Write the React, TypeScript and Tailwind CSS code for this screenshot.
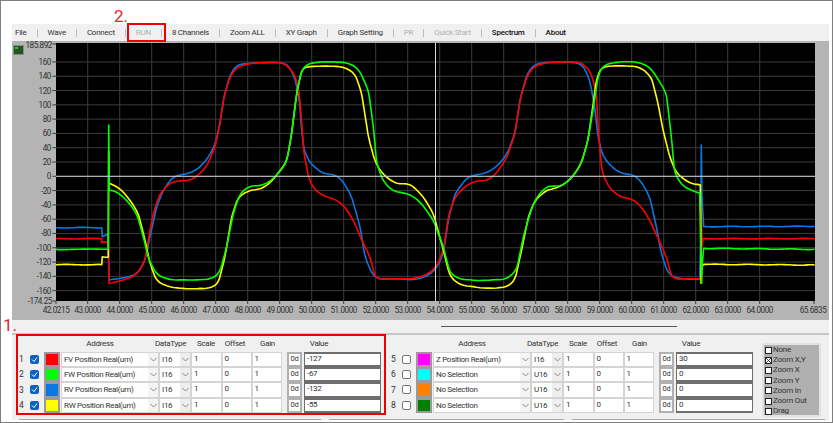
import React from 'react';

type Pt = [number, number];

// Curve points are read off three crops of the plot, so each list keeps the crop's own coordinates
const toPage = (offsetX: number, pts: number[]): Pt[] => {
  const out: Pt[] = [];
  for (let i = 0; i < pts.length; i += 2) out.push([offsetX + pts[i] / 3, 50 + pts[i + 1] / 3]);
  return out;
};

const buildCurve = (a: number[], b: number[], c: number[]): Pt[] => [
  ...toPage(0, a),
  ...toPage(280, b),
  ...toPage(553, c),
];

const curves = [
  {
    color: '#0a78e0',
    pts: buildCurve(
      [168,533,305,533,307,560,325,552,327,690,400,678,420,660,437,625,450,560,470,470,490,420,520,378,560,372,590,360,620,330,645,285,660,220,672,140,690,75,710,45,740,40,780,38,840,37],
      [25,45,45,85,58,150,65,240,72,300,90,340,130,372,165,373,190,395,215,440,240,530,255,620,275,670,295,688,350,686,400,690,440,680,470,655,490,610,505,510,525,430,565,378,610,372,645,355,680,315,705,250,720,150,740,75,760,45,790,38,819,36],
      [60,36,90,45,110,90,125,170,135,260,150,320,180,355,210,372,240,373,265,395,290,440,310,530,325,610,345,670,370,685,440,688,443,560,445,285,447,440,452,530,785,529],
    ),
  },
  {
    color: '#ff0000',
    pts: buildCurve(
      [168,566,305,566,305,577,325,577,327,700,360,693,400,680,420,660,435,630,445,570,460,490,480,430,510,398,540,392,565,392,590,380,620,350,645,290,660,220,672,140,690,80,710,52,740,42,780,38,840,37],
      [20,45,45,75,58,130,65,220,72,310,85,380,100,415,130,438,160,445,190,465,220,510,245,570,270,620,285,680,300,688,350,686,400,686,440,675,470,650,490,600,505,500,525,440,560,405,590,392,620,392,645,375,680,325,705,250,720,150,740,80,760,50,790,40,819,37],
      [60,35,90,40,115,70,130,130,138,270,148,370,170,415,200,440,240,448,265,470,290,510,320,575,340,620,358,688,440,686,443,686,445,470,447,590,450,566,785,566],
    ),
  },
  {
    color: '#ffff00',
    pts: buildCurve(
      [168,644,305,644,307,620,325,622,326,305,328,400,360,415,390,450,415,490,435,570,450,640,470,695,510,712,570,717,630,715,655,700,675,620,695,500,715,440,750,420,780,418,810,400,840,362],
      [20,335,35,250,50,130,65,60,80,50,130,48,190,50,225,70,245,130,265,260,285,335,310,375,350,403,390,400,430,440,460,490,490,600,510,680,540,705,610,715,680,712,705,690,725,600,745,500,765,450,800,420,819,417],
      [30,405,60,380,85,340,105,270,118,180,130,90,145,50,200,47,260,50,295,80,315,160,330,240,350,320,370,370,410,400,442,405,443,500,444,700,447,650,452,643,785,645],
    ),
  },
  {
    color: '#00ff00',
    pts: buildCurve(
      [168,598,325,598,326,225,328,420,350,425,380,450,410,490,430,560,445,625,470,675,510,690,600,690,640,685,660,665,680,590,700,490,720,430,750,407,780,408,810,395,840,365],
      [20,335,35,250,50,130,65,60,85,40,130,35,200,37,235,55,265,120,280,230,290,340,310,395,340,425,385,430,420,455,460,510,490,590,510,670,540,688,600,692,680,688,710,660,730,560,750,490,770,440,800,410,819,408],
      [30,408,60,378,85,340,105,270,120,180,135,80,150,45,200,35,250,35,290,50,320,95,340,130,355,260,365,370,390,410,440,430,443,598,446,700,448,640,452,595,785,598],
    ),
  },
];

// Rounds the corners of a trace, except the sharp steps and spikes, and adds a little sensor noise
const toPath = (pts: Pt[], seed: number) => {
  const out: Pt[] = [pts[0]];
  pts.slice(1, -1).forEach((v, idx) => {
    const p = pts[idx];
    const n = pts[idx + 2];
    const sharp = Math.abs(v[0] - p[0]) < 2 || Math.abs(n[0] - v[0]) < 2;
    if (sharp) {
      out.push(v);
      return;
    }
    const cut = (o: Pt): Pt => {
      const len = Math.hypot(o[0] - v[0], o[1] - v[1]);
      const f = Math.min(0.5, 7 / len);
      return [v[0] + (o[0] - v[0]) * f, v[1] + (o[1] - v[1]) * f];
    };
    const a = cut(p);
    const b = cut(n);
    for (let s = 0; s <= 4; s++) {
      const t = s / 4;
      const q = (i: 0 | 1) => (1 - t) * (1 - t) * a[i] + 2 * t * (1 - t) * v[i] + t * t * b[i];
      out.push([q(0), q(1)]);
    }
  });
  out.push(pts[pts.length - 1]);

  let d = `M${out[0][0].toFixed(1)} ${out[0][1].toFixed(1)}`;
  out.slice(1).forEach(([x, y], i) => {
    const [px, py] = out[i];
    const steps = Math.max(1, Math.floor(Math.abs(x - px) / 2.5));
    for (let s = 1; s <= steps; s++) {
      const t = s / steps;
      const cx = px + t * (x - px);
      const noise = s === steps ? 0 : Math.sin(cx * 2.3 + seed) * 0.3;
      d += `L${cx.toFixed(1)} ${(py + t * (y - py) + noise).toFixed(1)}`;
    }
  });
  return d;
};

const PLOT = { left: 56, right: 815, top: 43, bottom: 301 };
const xOf = (v: number) => 87.7 + (v - 43) * 32;
const yOf = (v: number) => 176.3 - v * 0.7146;
const yTicks = Array.from({ length: 17 }, (_, i) => 160 - i * 20);
const xTicks = Array.from({ length: 22 }, (_, i) => 43 + i);

const Chart = () => (
  <svg width={817} height={279} className="block overflow-visible" style={{ fontFamily: 'Roboto, sans-serif' }}>
    <g transform="translate(-12 -41)">
      <rect x={PLOT.left} y={PLOT.top} width={PLOT.right - PLOT.left} height={PLOT.bottom - PLOT.top} fill="#000" />
      {xTicks.map((v) => (
        <line key={v} x1={xOf(v)} x2={xOf(v)} y1={PLOT.top} y2={PLOT.bottom} stroke="#3c3c3c" />
      ))}
      {yTicks.map((v) => (
        <line key={v} x1={PLOT.left} x2={PLOT.right} y1={yOf(v)} y2={yOf(v)} stroke="#3c3c3c" />
      ))}
      {curves.map((c, i) => (
        <path key={c.color} d={toPath(c.pts, i * 1.7)} fill="none" stroke={c.color} strokeWidth={1.6} strokeLinejoin="round" />
      ))}
      <line x1={PLOT.left} x2={PLOT.right} y1={yOf(0)} y2={yOf(0)} stroke="#d0d0d0" />
      <line x1={435.5} x2={435.5} y1={PLOT.top} y2={PLOT.bottom} stroke="#d8d8d8" />

      <g fill="#333" fontSize={8.2} textAnchor="end" letterSpacing={-0.45}>
        {yTicks.map((v) => (
          <text key={v} x={51} y={yOf(v) + 3}>{v}</text>
        ))}
        <text x={52} y={47.5}>185.892</text>
        <text x={52} y={304}>-174.25</text>
      </g>
      <g stroke="#3a3a3a">
        {[...yTicks.map(yOf), 44, 301].map((y) => (
          <line key={y} x1={52.5} x2={56} y1={y} y2={y} />
        ))}
        <line x1={56} x2={56} y1={301} y2={304} />
        <line x1={814} x2={814} y1={301} y2={304} />
        {xTicks.map((v) => (
          <line key={v} x1={xOf(v)} x2={xOf(v)} y1={301} y2={304} />
        ))}
      </g>
      <g fill="#333" fontSize={8.2} textAnchor="middle" letterSpacing={-0.45}>
        <text x={56} y={313}>42.0215</text>
        {xTicks.filter((v) => v !== 65).map((v) => (
          <text key={v} x={xOf(v)} y={313}>{v}.0000</text>
        ))}
        <text x={813} y={313}>65.6835</text>
      </g>
      <rect x={13.5} y={45.5} width={10} height={9} fill="#1c5a1c" stroke="#8a8a8a" />
      <rect x={15} y={47} width={3} height={2} fill="#5fa85f" />
    </g>
  </svg>
);

const menu = [
  { label: 'File' },
  { label: 'Wave' },
  { label: 'Connect' },
  { label: 'RUN', off: true },
  { label: '8 Channels' },
  { label: 'Zoom ALL' },
  { label: 'XY Graph' },
  { label: 'Graph Setting' },
  { label: 'PR', off: true },
  { label: 'Quick Start', off: true },
  { label: 'Spectrum', strong: true },
  { label: 'About', strong: true },
];

const Chevron = () => (
  <svg width={7} height={5} viewBox="0 0 7 5" className="shrink-0">
    <path d="M0.5 1 L3.5 4 L6.5 1" fill="none" stroke="#8a8a8a" />
  </svg>
);

const CheckBox = ({ on }: { on: boolean }) =>
  on ? (
    <div className="w-[9px] h-[9px] rounded-[2px] bg-[#0a62c4] flex items-center justify-center">
      <svg width={7} height={7} viewBox="0 0 7 7">
        <path d="M1 3.5 L3 5.5 L6 1.5" fill="none" stroke="#fff" strokeWidth={1} />
      </svg>
    </div>
  ) : (
    <div className="w-[9px] h-[9px] rounded-[2px] bg-white border border-[#777]" />
  );

interface Channel {
  n: number;
  on: boolean;
  color: string;
  address: string;
  type: string;
  value: string;
}

const left: Channel[] = [
  { n: 1, on: true, color: '#ff0000', address: 'FV Position Real(um)', type: 'I16', value: '-127' },
  { n: 2, on: true, color: '#00ff00', address: 'FW Position Real(um)', type: 'I16', value: '-67' },
  { n: 3, on: true, color: '#0a78e0', address: 'RV Position Real(um)', type: 'I16', value: '-132' },
  { n: 4, on: true, color: '#ffff00', address: 'RW Position Real(um)', type: 'I16', value: '-55' },
];

const right: Channel[] = [
  { n: 5, on: false, color: '#ff00ff', address: 'Z Position Real(um)', type: 'I16', value: '30' },
  { n: 6, on: false, color: '#00ffff', address: 'No Selection', type: 'U16', value: '0' },
  { n: 7, on: false, color: '#ff8000', address: 'No Selection', type: 'U16', value: '0' },
  { n: 8, on: false, color: '#008000', address: 'No Selection', type: 'U16', value: '0' },
];

const Field = ({ text, className }: { text: string; className: string }) => (
  <div className={`h-full bg-white border border-[#d4d4d4] pl-[2px] leading-[12px] ${className}`}>{text}</div>
);

const ChannelRow = ({ ch }: { ch: Channel }) => (
  <div className="flex items-center h-[15.2px] text-[8px] tracking-[-0.3px] text-[#333] whitespace-nowrap">
    <div className="w-[13px] pl-[2px] text-[8.5px]">{ch.n}</div>
    <div className="w-[14px] flex"><CheckBox on={ch.on} /></div>
    <div className="w-[16px] h-full border-2 border-[#9a9a9a]" style={{ backgroundColor: ch.color }} />
    <div className="w-[1px]" />
    <div className="w-[98px] h-full flex bg-white border border-[#d4d4d4]">
      <div className="flex-1 pl-[2px] leading-[13px]">{ch.address}</div>
      <div className="w-[10px] flex items-center justify-center bg-[#f4f4f4]"><Chevron /></div>
    </div>
    <div className="w-[32px] h-full flex bg-white border border-[#d4d4d4]">
      <div className="flex-1 pl-[2px] leading-[13px]">{ch.type}</div>
      <div className="w-[10px] flex items-center justify-center bg-[#eeeeee]"><Chevron /></div>
    </div>
    <Field text="1" className="w-[30.5px]" />
    <Field text="0" className="w-[30px]" />
    <Field text="1" className="w-[30.5px]" />
    <div className="w-[5px]" />
    <div className="w-[15px] h-full bg-white border-2 border-[#b0b0b0] text-center text-[7.5px] leading-[10px]">0d</div>
    <div className="w-[2px]" />
    <div className="w-[77px] h-full bg-white border border-[#6e6e6e] border-t-2 border-b-2 pl-[2px] leading-[9px]">{ch.value}</div>
  </div>
);

const ChannelGroup = ({ rows }: { rows: Channel[] }) => (
  <div className="w-[372px] shrink-0">
    <div className="flex h-[17px] items-center text-[8px] tracking-[-0.3px] text-[#333] text-center whitespace-nowrap">
      <div className="w-[57px]" />
      <div className="w-[52px]">Address</div>
      <div className="w-[28.5px]" />
      <div className="w-[32px]">DataType</div>
      <div className="w-[4.5px]" />
      <div className="w-[30px]">Scale</div>
      <div className="w-[28px]">Offset</div>
      <div className="w-[3.5px]" />
      <div className="w-[30px]">Gain</div>
      <div className="w-[21.5px]" />
      <div className="w-[30px]">Value</div>
    </div>
    {rows.map((ch) => (
      <ChannelRow key={ch.n} ch={ch} />
    ))}
  </div>
);

const zoomModes = ['None', 'Zoom X,Y', 'Zoom X', 'Zoom Y', 'Zoom In', 'Zoom Out', 'Drag'];

export default function App() {
  return (
    <div
      className="relative w-[833px] h-[423px] overflow-hidden bg-white border border-[#7f7f7f] pt-[23px] pl-[11px] pr-[3px]"
      style={{ fontFamily: 'Roboto, sans-serif' }}
    >
      {/* Menu bar */}
      <div className="flex items-center h-[17px] gap-[10px] pl-[3px] bg-[#f0f0f0] text-[8px] tracking-[-0.25px] text-[#333] whitespace-nowrap">
        {menu.map((item, i) => (
          <React.Fragment key={item.label}>
            {i > 0 && <div className="w-px h-[8px] bg-[#bdbdbd]" />}
            <span className={item.off ? 'text-[#b0b0b0]' : item.strong ? 'text-[#111] font-medium' : ''}>{item.label}</span>
          </React.Fragment>
        ))}
      </div>

      <div className="bg-[#b4b4b4] h-[279px]">
        <Chart />
      </div>

      {/* Scroll track under the chart */}
      <div className="h-[13px] bg-[#f0f0f0] flex items-center pl-[429px]">
        <div className="w-[236px] h-px bg-[#555]" />
      </div>
      <div className="h-[2px] bg-[#c6c6c6]" />

      <div className="flex h-[84px] pl-[5px] bg-[#f0f0f0]">
        <ChannelGroup rows={left} />
        <ChannelGroup rows={right} />
        <div className="w-[59px] h-[74px] mt-[8px] ml-[1px] border-2 border-[#e2e2e2] bg-[#b0b0b0] text-[8px] tracking-[-0.2px] text-[#333] pl-[1px]">
          {zoomModes.map((mode, i) => (
            <div key={mode} className="flex items-center gap-[1px] h-[10.2px] whitespace-nowrap">
              <div className="w-[7px] h-[7px] shrink-0 bg-white border border-[#222] flex items-center justify-center">
                {i === 1 && (
                  <svg width={5} height={5} viewBox="0 0 5 5">
                    <path d="M0 0 L5 5 M5 0 L0 5" stroke="#222" strokeWidth={0.8} />
                  </svg>
                )}
              </div>
              <span>{mode}</span>
            </div>
          ))}
        </div>
      </div>

      {/* Bottom separators */}
      <div className="flex h-[1px] pl-[7px] gap-[8px] bg-[#f0f0f0]">
        <div className="w-[302px] bg-[#a8a8a8]" />
        <div className="w-[235px] bg-[#a8a8a8]" />
        <div className="w-[253px] bg-[#a8a8a8]" />
      </div>

      {/* Red annotations drawn over the screenshot */}
      <span className="absolute left-[113px] top-[5px] text-[17px] leading-[20px] text-[#e8222a]">2.</span>
      <div className="absolute left-[126px] top-[22px] w-[39px] h-[19px] border-2 border-[#f00000]" />
      <span className="absolute left-[2px] top-[314px] text-[17px] leading-[20px] text-[#e8222a]">1.</span>
      <div className="absolute left-[15px] top-[333px] w-[370px] h-[81px] border-2 border-[#f00000]" />
    </div>
  );
}
